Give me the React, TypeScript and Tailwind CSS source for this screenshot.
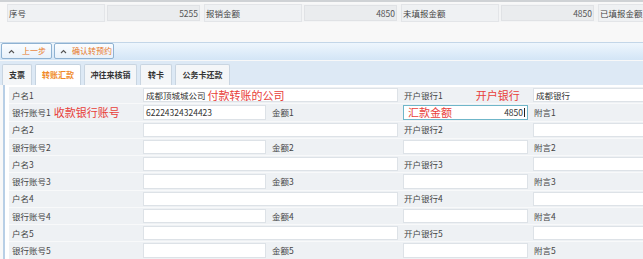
import React from "react";

const font = { fontFamily: '"Noto Sans CJK SC", "Noto Sans", sans-serif' };

function Chevron() {
  return (
    <svg width="7" height="5" viewBox="0 0 7 5" className="shrink-0">
      <path d="M1 4 L3.5 1.5 L6 4" fill="none" stroke="#555" strokeWidth="1.1" />
    </svg>
  );
}

const summary = [
  { label: "序号", value: "5255" },
  { label: "报销金额", value: "4850" },
  { label: "未填报金额", value: "4850" },
  { label: "已填报金额", value: "" },
];

const tabs = [
  { t: "支票", w: "w-[30px]" },
  { t: "转账汇款", w: "w-[46px]" },
  { t: "冲往来核销", w: "w-[53px]" },
  { t: "转卡", w: "w-[32px]" },
  { t: "公务卡还款", w: "w-[55px]" },
];

function Label({ children }: { children: React.ReactNode }) {
  return (
    <div className="flex h-full items-center bg-[#eef1f4] pl-[3px] text-[8.5px] text-[#444] whitespace-nowrap">
      {children}
    </div>
  );
}

function Field({ children, focus }: { children?: React.ReactNode; focus?: boolean }) {
  return (
    <div className="h-full bg-[#eef1f4] py-[1px] pl-[2px] pr-[3px]">
      <div
        className={
          "flex h-full items-center bg-white px-[2px] text-[8.5px] text-[#333] whitespace-nowrap border " +
          (focus ? "border-[#6fb6c9]" : "border-[#dde2e7]")
        }
      >
        {children}
      </div>
    </div>
  );
}

const red = "text-[11px] text-[#e8403a] leading-none";

export default function App() {
  const rows: React.ReactNode[] = [];
  for (let i = 1; i <= 5; i++) {
    rows.push(
      <React.Fragment key={"n" + i}>
        <Label>户名{i}</Label>
        <div className="col-span-2">
          <Field>
            {i === 1 && (
              <>
                成都顶城城公司<span className={red + " ml-[2px]"}>付款转账的公司</span>
              </>
            )}
          </Field>
        </div>
        <Label>
          开户银行{i}
          {i === 1 && <span className={red + " ml-[33px]"}>开户银行</span>}
        </Label>
        <div className="col-span-2">
          <Field>{i === 1 && "成都银行"}</Field>
        </div>
      </React.Fragment>
    );
    rows.push(
      <React.Fragment key={"a" + i}>
        <Label>
          银行账号{i}
          {i === 1 && <span className={red + " ml-[3px]"}>收款银行账号</span>}
        </Label>
        <Field>{i === 1 && "62224324324423"}</Field>
        <Label>金额{i}</Label>
        <Field focus={i === 1}>
          {i === 1 && (
            <div className="flex w-full items-center justify-between">
              <span className={red + " ml-[2px]"}>汇款金额</span>
              <span className="flex items-center">
                4850<span className="ml-[1px] h-[9px] w-px bg-[#222]" />
              </span>
            </div>
          )}
        </Field>
        <Label>附言{i}</Label>
        <Field />
      </React.Fragment>
    );
  }

  return (
    <div className="h-[259px] w-[643px] overflow-hidden bg-[#f8f8f8]" style={font}>
      {/* summary strip */}
      <div className="h-[42px] border-t-2 border-[#cfd2d5] pt-[2px] pl-[7px]">
        <div className="flex">
          {summary.map((s) => (
            <div key={s.label} className="flex h-[18px] w-[197px] shrink-0 bg-[#f3f4f5]">
              <div className="flex w-[98px] items-center border border-[#e3e5e8] bg-[#eff1f3] pl-[1px] text-[8.5px] text-[#444]">
                {s.label}
              </div>
              <div className="w-[99px] bg-[#f3f4f5] py-[1px] pl-[2px] pr-[4px]">
                <div className="flex h-full items-center justify-end border border-[#e0e2e5] bg-[#eaecee] pr-[1px] text-[8.5px] text-[#555]">
                  {s.value}
                </div>
              </div>
            </div>
          ))}
        </div>
      </div>

      {/* toolbar */}
      <div className="flex h-[18px] items-start gap-[2px] border-t border-[#c3d6e8] bg-gradient-to-b from-[#eef6fd] to-[#d3e5f6] pl-[1px]">
        <button className="flex h-[16px] w-[51px] items-center whitespace-nowrap rounded-[2px] border border-[#8fb2d2] bg-gradient-to-b from-[#fbfdff] to-[#e8f1fa] pl-[6px] text-[8px] text-[#e8771f]">
          <Chevron />
          <span className="ml-[7px]">上一步</span>
        </button>
        <button className="flex h-[16px] w-[60px] items-center whitespace-nowrap rounded-[2px] border border-[#8fb2d2] bg-gradient-to-b from-[#fbfdff] to-[#e8f1fa] pl-[5px] text-[8px] text-[#e8771f]">
          <Chevron />
          <span className="ml-[5px]">确认转预约</span>
        </button>
      </div>

      {/* tabs */}
      <div className="mt-[1px] flex h-[24px] items-end gap-[3px] bg-[#dde9f5] pl-[2px]">
        {tabs.map((t, i) => (
          <div
            key={t.t}
            className={
              "flex h-[21px] items-center justify-center whitespace-nowrap rounded-t-[2px] border border-b-0 text-[8px] font-bold " +
              t.w +
              " " +
              (i === 1
                ? "border-[#c5d3e0] bg-white text-[#f08a2a]"
                : "border-[#c9d5e1] bg-[#f4f6f8] text-[#333]")
            }
          >
            {t.t}
          </div>
        ))}
      </div>

      {/* form */}
      <div className="ml-[3px] h-[200px] border-l-2 border-[#b8cfe6] bg-white pt-[2px] pl-[4px]">
        <div className="grid w-[700px] auto-rows-[16.25px] grid-cols-[132px_128px_132px_130px_132px_46px] gap-y-[1px] bg-[#f8f9fa]">
          {rows.map((r) => r)}
        </div>
      </div>
    </div>
  );
}
